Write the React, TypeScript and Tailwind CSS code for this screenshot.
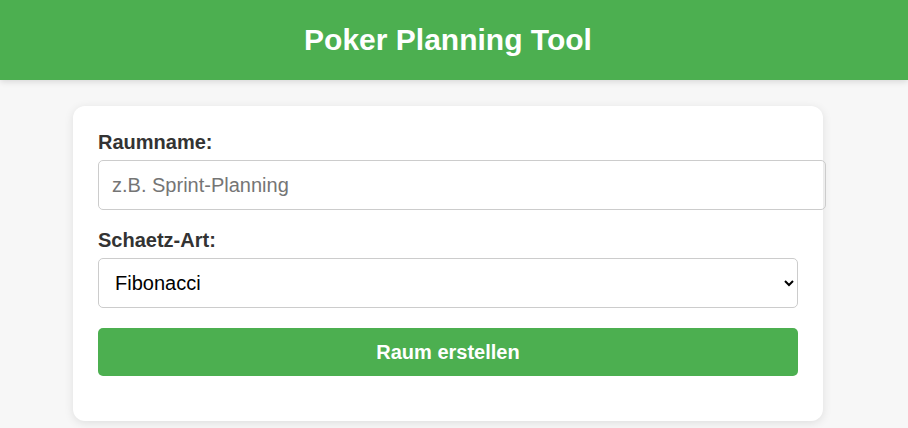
import React from "react";

export default function App() {
  return (
    <div className="min-h-[428px] bg-[#f7f7f7] font-['Liberation_Sans',Arial,sans-serif] text-[#333]">
      <header className="h-[80px] bg-[#4CAF50] flex items-center justify-center pr-[12px] shadow-[0_2px_6px_rgba(0,0,0,0.12)]">
        <h1 className="text-white text-[30px] font-bold leading-none">Poker Planning Tool</h1>
      </header>
      <main className="flex justify-center pt-[26px] pr-[12px]">
        <div className="w-[750px] bg-white rounded-[12px] p-[25px] shadow-[0_2px_10px_rgba(0,0,0,0.1)]">
          <label className="block text-[20px] font-bold leading-[23px] mb-[6px]">Raumname:</label>
          <input
            type="text"
            placeholder="z.B. Sprint-Planning"
            className="block box-content w-[700px] h-[24px] px-[13px] py-[12px] border border-[#ccc] rounded-[5px] text-[20px] text-black placeholder:text-[#757575] outline-none"
          />
          <label className="block text-[20px] font-bold leading-[23px] mt-[19px] mb-[6px]">Schaetz-Art:</label>
          <select className="block w-[700px] h-[50px] pl-[12px] pr-[18px] border border-[#ccc] rounded-[5px] text-[20px] text-black bg-white">
            <option>Fibonacci</option>
          </select>
          <button className="block w-[700px] h-[48px] mt-[20px] bg-[#4CAF50] rounded-[5px] text-white text-[20px] font-bold">
            Raum erstellen
          </button>
          <div className="h-[20px]" />
        </div>
      </main>
    </div>
  );
}
